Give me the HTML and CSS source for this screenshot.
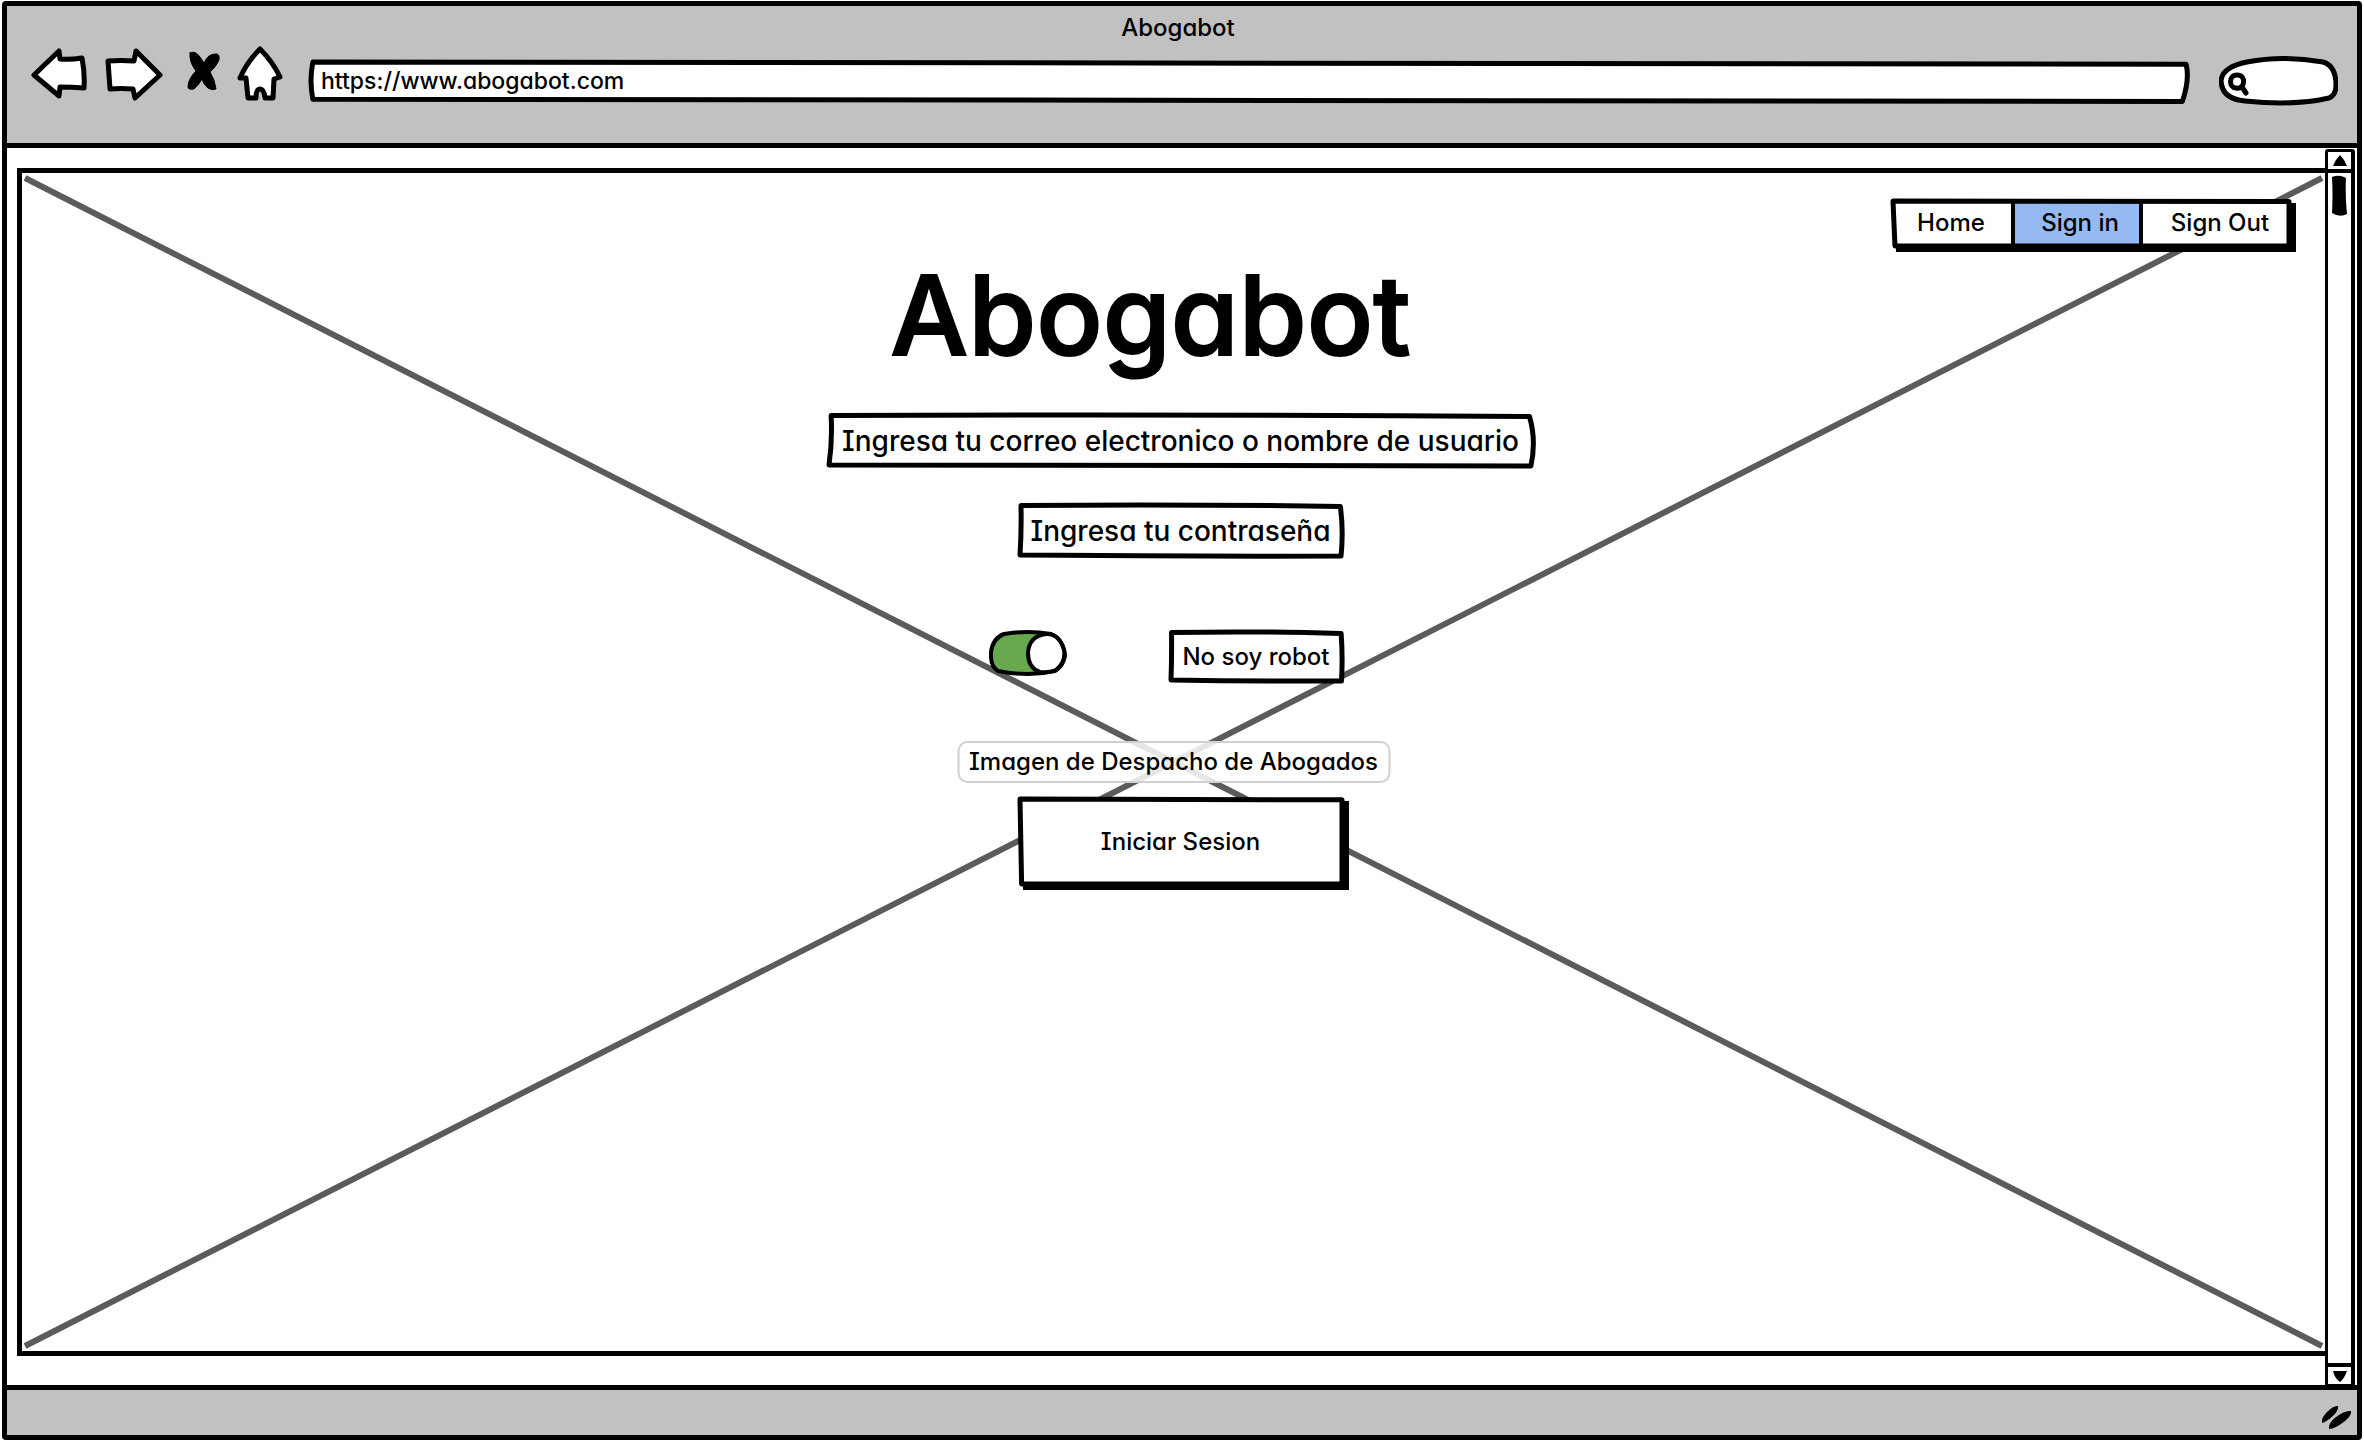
FILE: index.html
```html
<!DOCTYPE html>
<html lang="es">
<head>
<meta charset="utf-8">
<meta name="viewport" content="width=device-width, initial-scale=1">
<title>Abogabot</title>
<link rel="stylesheet" href="styles.css">
</head>
<body>
<svg class="defs" aria-hidden="true">
  <symbol id="box" viewBox="0 0 100 100" preserveAspectRatio="none">
    <path d="M.3 1Q50 -2 99.5 3Q100.5 50 99.7 100Q50 101 0 98Q.5 50 .3 1Z"/>
  </symbol>
  <symbol id="bar" viewBox="0 0 100 100" preserveAspectRatio="none">
    <path d="M.1 0Q50 0 99.9 6Q100.1 45 99.7 104Q50 99 .1 98Q-.1 50 .1 0Z"/>
  </symbol>
  <symbol id="panel" viewBox="0 0 100 100" preserveAspectRatio="none">
    <path d="M0 0L100 1V100H.5Z"/>
  </symbol>
</svg>
<div class="window">
  <header class="chrome">
    <div class="window-title">Abogabot</div>
    <div class="toolbar">
      <div class="tools">
        <button class="tool" type="button" aria-label="Atrás">
          <svg width="58" height="74" viewBox="31 44 58 74"><path d="M34 75L59 51L60 59Q70 60 82 58Q85 73 84 88Q72 87 60 87L59 96Z"/></svg>
        </button>
        <button class="tool" type="button" aria-label="Adelante">
          <svg width="58" height="74" viewBox="105 44 58 74"><path d="M108 61Q121 60 134 61L136 51L160 75L135 98L133 89Q121 88 110 89Q109 75 108 61Z"/></svg>
        </button>
        <button class="tool" type="button" aria-label="Detener">
          <svg width="42" height="74" viewBox="179 44 42 74"><path class="solid" d="M190 53Q195 50 200 57L204 63Q208 54 215 54Q220 53 219 60Q216 67 210 72Q215 80 216 89Q212 91 208 88Q203 84 202 79Q198 86 194 89Q188 90 188 87Q188 79 196 71Q189 62 190 53Z"/></svg>
        </button>
        <button class="tool" type="button" aria-label="Inicio">
          <svg width="56" height="74" viewBox="237 44 56 74"><path d="M260 49Q273 62 280 77L274 79L273 98L265 98Q264 89 260 89Q256 89 256 98L248 98L246 78L240 78Q247 62 260 49Z"/></svg>
        </button>
      </div>
      <label class="sketch address">
        <svg class="outline"><use href="#bar"/></svg>
        <input type="text" aria-label="Dirección" value="https://www.abogabot.com">
      </label>
      <label class="search">
        <svg width="119" height="50" viewBox="2219 57 119 50">
          <path d="M2247 63Q2283 56 2323 63Q2336 67 2336 86Q2336 96 2329 99Q2295 107 2245 102Q2222 100 2221 82Q2222 68 2247 63Z"/>
          <path class="lens" d="M2237 76C2228 76 2229 89 2236 89C2245 91 2247 76 2237 76M2242 88L2246 94"/>
        </svg>
        <input type="search" aria-label="Buscar">
      </label>
    </div>
  </header>

  <div class="viewport">
    <main class="page">
      <svg class="cross" viewBox="0 0 100 100" preserveAspectRatio="none" aria-hidden="true">
        <path d="M0 0L100 100M0 100L100 0"/>
      </svg>
      <nav class="sketch raised menu">
        <a href="#home">Home</a>
        <a class="active" href="#signin">Sign in</a>
        <a href="#signout">Sign Out</a>
        <svg class="outline hollow"><use href="#panel"/></svg>
      </nav>
      <h1>Abogabot</h1>
      <form class="login">
        <label class="sketch field email">
          <svg class="outline"><use href="#box"/></svg>
          <input type="text" aria-label="Correo o usuario" placeholder="Ingresa tu correo electronico o nombre de usuario">
        </label>
        <label class="sketch field">
          <svg class="outline"><use href="#box"/></svg>
          <input type="password" aria-label="Contraseña" placeholder="Ingresa tu contraseña">
        </label>
        <div class="captcha">
          <span class="switch">
            <input type="checkbox" role="switch" id="human" checked>
            <svg width="78" height="46" viewBox="0 0 78 46" aria-hidden="true">
              <path class="track" d="M15 4Q38 0 62 4Q75 10 76 26Q74 36 66 41Q40 47 9 41Q1 36 2 22Q4 8 15 4Z"/>
              <path d="M57 4Q70 3 75 20Q77 32 67 40Q60 43 51 42Q39 38 39 23Q40 6 57 4Z"/>
            </svg>
          </span>
          <label class="sketch robot" for="human">
            <svg class="outline"><use href="#box"/></svg>
            <span>No soy robot</span>
          </label>
        </div>
        <button class="sketch raised submit" type="submit">
          <svg class="outline"><use href="#panel"/></svg>
          <span>Iniciar Sesion</span>
        </button>
      </form>
      <p class="caption">Imagen de Despacho de Abogados</p>
    </main>
    <div class="scrollbar" aria-hidden="true">
      <div class="arrow"><svg width="16" height="12" viewBox="0 0 16 12"><path d="M8 0Q13 5 15 11H1Q3 5 8 0Z"/></svg></div>
      <div class="rail"><svg width="17" height="42" viewBox="0 0 17 42"><path d="M1 2Q8 -1 15 3Q14 20 16 39Q9 43 1 38Q2 20 1 2Z"/></svg></div>
      <div class="arrow"><svg width="16" height="12" viewBox="0 0 16 12"><path d="M1 1H15Q12 9 8 12Q3 9 1 1Z"/></svg></div>
    </div>
  </div>

  <footer class="status">
    <svg width="36" height="28" viewBox="0 0 36 28" aria-hidden="true"><path d="M2 20Q1 15 7 9Q14 2 18 3Q19 7 13 13Q6 19 2 20ZM9 26Q8 20 16 14Q25 7 31 8Q32 12 25 18Q15 26 9 26Z"/></svg>
  </footer>
</div>
</body>
</html>
```
FILE: styles.css
```css
* { box-sizing: border-box; }

body {
  margin: 0;
  background: #fff;
  color: #000;
  font: 500 24px/32px Inter, "Liberation Sans", sans-serif;
  font-feature-settings: "cv11", "cv08";
}

input, button {
  font: inherit;
  font-feature-settings: inherit;
  color: inherit;
  border: 0;
  padding: 0;
  background: none;
  appearance: none;
  outline-offset: 4px;
}

.defs { position: absolute; width: 0; height: 0; }

.window {
  display: flex;
  flex-direction: column;
  min-height: calc(100vh - 3px);
  margin: 1px 2px 2px;
  border: 5px solid #000;
  border-radius: 4px;
}

/* Shapes with a pen-drawn outline */
.sketch { position: relative; display: flex; align-items: center; }
.outline {
  position: absolute;
  inset: 2px;
  width: calc(100% - 4px);
  height: calc(100% - 4px);
  overflow: visible;
  pointer-events: none;
  fill: #fff;
  stroke: #000;
  stroke-width: 5px;
  stroke-linejoin: round;
}
symbol { overflow: visible; }
symbol path { vector-effect: non-scaling-stroke; }
.hollow { fill: none; }
.sketch > input, .sketch > span { position: relative; width: 100%; text-align: center; }
.raised { box-shadow: 5px 4px 0 #000; }

/* Browser bar */
.chrome {
  height: 142px;
  background: #c1c1c1;
  border-bottom: 5px solid #000;
}
.window-title { padding: 6px 8px 0 0; text-align: center; }
.toolbar {
  display: flex;
  align-items: center;
  padding: 0 19px 0 24px;
}
.tools { display: flex; gap: 16px; padding-right: 16px; }
.tool { display: flex; cursor: pointer; }
.tool path, .search path {
  fill: #fff;
  stroke: #000;
  stroke-width: 5px;
  stroke-linejoin: round;
  stroke-linecap: round;
}
.tool .solid { fill: #000; stroke-width: 1px; }
.address { flex: 1; height: 42px; font-size: 23px; }
.sketch.address > input { padding-left: 12px; text-align: left; }
.search { display: flex; position: relative; margin-left: 29px; }
.search .lens { fill: none; }
.search input { position: absolute; inset: 8px 12px 8px 32px; width: 75px; }

/* Page area */
.viewport { flex: 1; display: flex; padding-left: 10px; }
.page {
  position: relative;
  flex: 1;
  display: flex;
  flex-direction: column;
  align-items: center;
  margin: 20px 0 29px;
  border: 5px solid #000;
  border-right: 0;
}
.cross {
  position: absolute;
  inset: 5px 3px;
  width: calc(100% - 6px);
  height: calc(100% - 10px);
  fill: none;
  stroke: #5b5b5c;
  overflow: visible;
}
.cross path { stroke-width: 6px; vector-effect: non-scaling-stroke; }

.menu { align-self: flex-end; height: 49px; margin: 26px 34px 0 0; background: #fff; }
.menu a {
  display: flex;
  align-items: center;
  justify-content: center;
  height: 100%;
  width: 148px;
  padding: 0 0 2px 6px;
  color: inherit;
  text-decoration: none;
}
.menu a:first-child { width: 120px; padding-left: 0; }
.menu .active { width: 132px; background: #95baf1; border: solid #000; border-width: 0 4px; }

h1 {
  position: relative;
  margin: 7px 0 0;
  padding-right: 46px;
  font-size: 110px;
  line-height: 120px;
  font-weight: 500;
  -webkit-text-stroke: 2px #000;
}

.login {
  display: flex;
  flex-direction: column;
  align-items: center;
  width: 326px;
  margin: 38px 0 0 14px;
}
.field { width: 100%; height: 55px; font-size: 28px; }
.email { width: 708px; margin-bottom: 35px; }
.field input::placeholder { color: #000; opacity: 1; }
.captcha {
  display: flex;
  justify-content: flex-end;
  align-items: flex-start;
  gap: 102px;
  width: 100%;
  margin: 72px 0 114px;
}
.switch { position: relative; display: flex; }
.switch input { position: absolute; inset: 0; margin: 0; cursor: pointer; }
.switch svg { position: relative; pointer-events: none; }
.switch path { fill: #fff; stroke: #000; stroke-width: 4px; }
.switch .track { fill: #6aa84f; }
.robot { flex: none; width: 175px; height: 53px; }
.submit { width: 100%; height: 89px; cursor: pointer; }

.caption {
  position: absolute;
  top: 50%;
  left: 50%;
  transform: translate(-50%, -50%);
  margin: 0;
  padding: 3px 10px;
  border: 2px solid #d0d0d0;
  border-radius: 10px;
  background: rgb(255 255 255 / 85%);
  white-space: nowrap;
}

.scrollbar {
  display: flex;
  flex-direction: column;
  width: 30px;
  margin: 1px 2px -2px 0;
  border: solid #000;
  border-width: 3px 4px 3px 3px;
  border-radius: 3px;
}
.arrow { display: flex; justify-content: center; align-items: center; height: 17px; }
.rail { flex: 1; display: flex; justify-content: center; padding-top: 2px; border: solid #000; border-width: 4px 0; }

/* Status strip */
.status {
  display: flex;
  justify-content: flex-end;
  align-items: center;
  height: 50px;
  padding: 8px 1px 0 0;
  background: #c1c1c1;
  border-top: 5px solid #000;
}
```
